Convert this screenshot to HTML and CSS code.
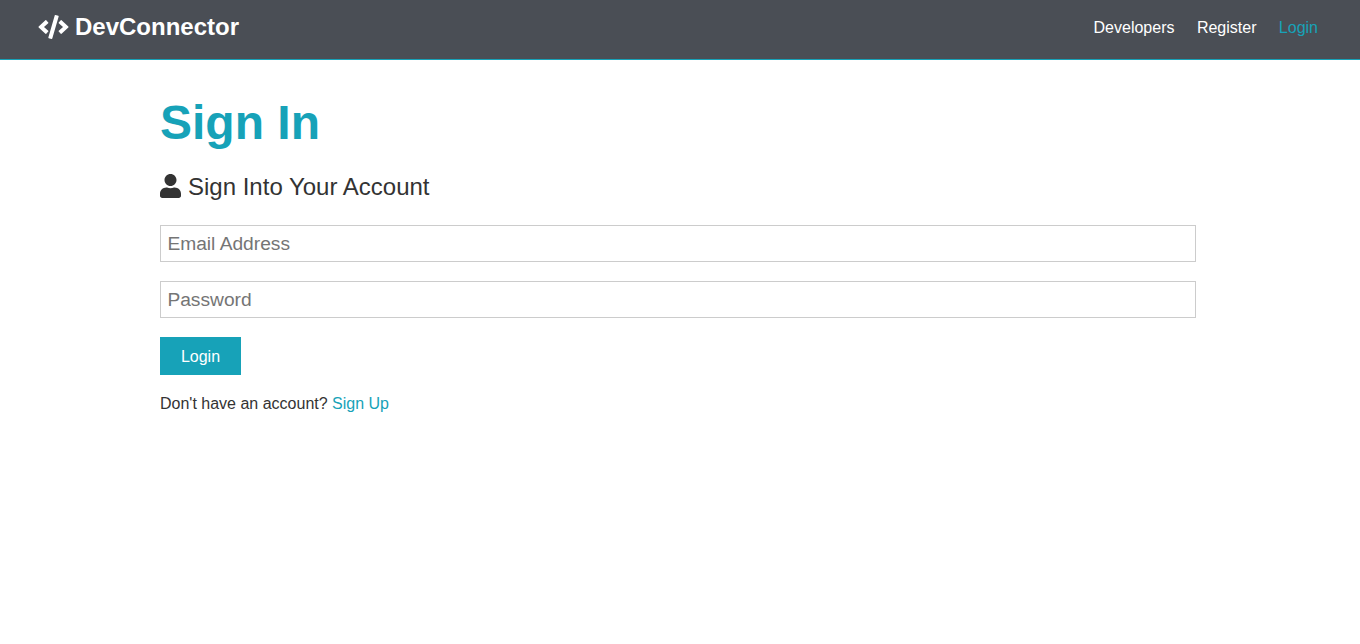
FILE: index.html
```html
<!DOCTYPE html>
<html lang="en">
<head>
<meta charset="utf-8">
<title>DevConnector</title>
<link rel="stylesheet" href="styles.css">
</head>
<body>
<nav class="navbar">
  <a class="brand" href="#">
    <svg class="brand-icon" viewBox="0 0 640 512" aria-hidden="true"><path d="M278.9 511.5l-61-17.7c-6.4-1.8-10-8.5-8.2-14.9L346.2 8.7c1.8-6.4 8.5-10 14.9-8.2l61 17.7c6.4 1.8 10 8.5 8.2 14.9L293.8 503.3c-1.9 6.4-8.5 10.1-14.9 8.2zm-114-112.2l43.5-46.4c4.6-4.9 4.3-12.7-.8-17.2L117 256l90.6-79.7c5.1-4.5 5.5-12.3.8-17.2l-43.5-46.4c-4.5-4.8-12.1-5.1-17-.5L3.8 247.2c-5.1 4.7-5.1 12.8 0 17.5l144.1 135.1c4.9 4.6 12.5 4.4 17-.5zm327.2.6l144.1-135.1c5.1-4.7 5.1-12.8 0-17.5L492.1 112.1c-4.8-4.5-12.4-4.3-17 .5L431.6 159c-4.6 4.9-4.3 12.7.8 17.2L523 256l-90.6 79.7c-5.1 4.5-5.5 12.3-.8 17.2l43.5 46.4c4.5 4.9 12.1 5.1 17 .6z"/></svg>
    DevConnector
  </a>
  <ul class="nav-links">
    <li><a href="#">Developers</a></li>
    <li><a href="#">Register</a></li>
    <li><a class="active" href="#">Login</a></li>
  </ul>
</nav>
<main class="container">
  <h1 class="large">Sign In</h1>
  <p class="lead">
    <svg class="lead-icon" viewBox="0 0 448 512" aria-hidden="true"><path d="M224 256c70.7 0 128-57.3 128-128S294.7 0 224 0 96 57.3 96 128s57.3 128 128 128zm89.6 32h-16.7c-22.2 10.2-46.9 16-72.9 16s-50.6-5.8-72.9-16h-16.7C60.2 288 0 348.2 0 422.4V464c0 26.5 21.5 48 48 48h352c26.5 0 48-21.5 48-48v-41.6c0-74.2-60.2-134.4-134.4-134.4z"/></svg>
    Sign Into Your Account
  </p>
  <form class="form">
    <div class="form-group"><input type="email" placeholder="Email Address"></div>
    <div class="form-group"><input type="password" placeholder="Password"></div>
    <button type="button" class="btn">Login</button>
  </form>
  <p class="note">Don't have an account? <a href="#">Sign Up</a></p>
</main>
</body>
</html>
```
FILE: styles.css
```css
* { box-sizing: border-box; margin: 0; padding: 0; }
body {
  font-family: "Liberation Sans", Arial, sans-serif;
  font-size: 16px;
  line-height: 1.6;
  color: #333;
  background: #fff;
}
a { color: #17a2b8; text-decoration: none; }
ul { list-style: none; }

.navbar {
  display: flex;
  align-items: center;
  justify-content: space-between;
  height: 60px;
  padding: 0 32px 3px 32px;
  background: #4a4e55;
  border-bottom: 1px solid #17a2b8;
}
.brand {
  display: flex;
  align-items: center;
  gap: 6px;
  color: #fff;
  font-size: 24px;
  font-weight: 700;
  padding-left: 6px;
  margin-bottom: 2px;
}
.brand-icon { width: 31px; height: 24px; fill: #fff; }
.nav-links { display: flex; gap: 22.4px; padding-right: 10px; }
.nav-links a { color: #fff; }
.nav-links a.active { color: #17a2b8; }

.container { width: 1036px; margin: 25px 0 0 160px; }
.large { font-size: 48px; line-height: 1.6; font-weight: 700; color: #17a2b8; margin-bottom: 6px; }
.lead { font-size: 24px; display: flex; align-items: center; gap: 7px; margin-bottom: 19px; }
.lead-icon { width: 21px; height: 24px; fill: #333; margin-bottom: 2px; }
.form-group { margin-bottom: 19px; }
input {
  display: block;
  width: 100%;
  height: 37px;
  padding: 6.4px;
  font-family: inherit;
  font-size: 19.2px;
  border: 1px solid #ccc;
  background: #fff;
}
.btn {
  display: block;
  width: 81px;
  height: 38px;
  border: 0;
  padding-top: 2px;
  background: #17a2b8;
  color: #fff;
  font-family: inherit;
  font-size: 16px;
}
.note { margin-top: 16px; }
```
